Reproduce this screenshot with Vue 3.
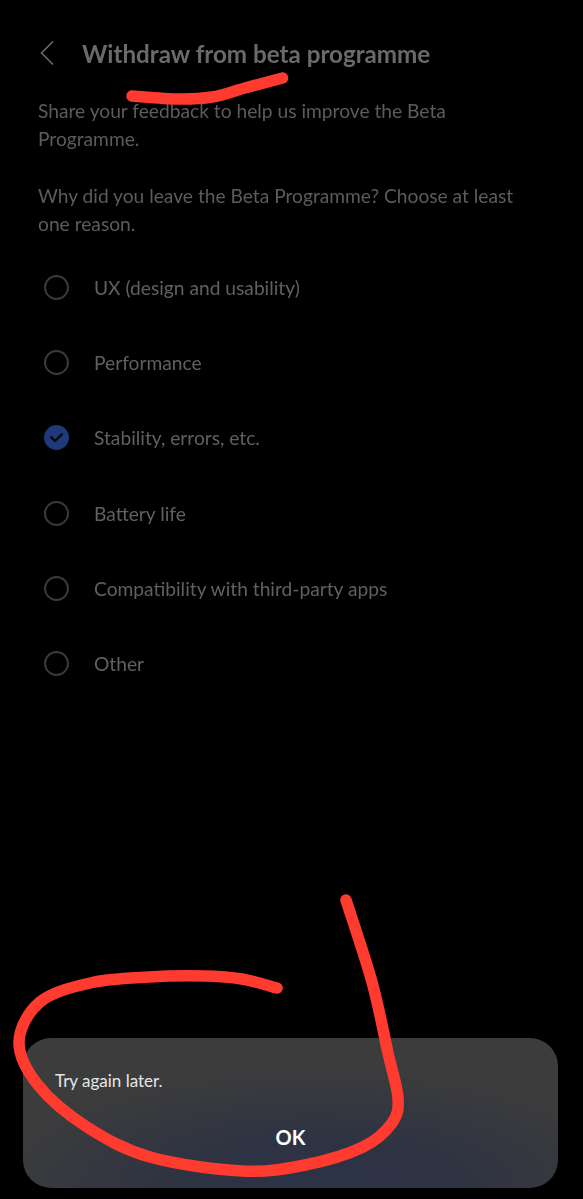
<script setup>
const reasons = [
  { label: 'UX (design and usability)', checked: false },
  { label: 'Performance', checked: false },
  { label: 'Stability, errors, etc.', checked: true },
  { label: 'Battery life', checked: false },
  { label: 'Compatibility with third-party apps', checked: false },
  { label: 'Other', checked: false }
]

function smooth(p) {
  let d = `M${p[0][0]} ${p[0][1]}`
  for (let i = 0; i < p.length - 1; i++) {
    const a = p[i - 1] || p[i], b = p[i], c = p[i + 1], e = p[i + 2] || c
    const c1 = [b[0] + (c[0] - a[0]) / 6, b[1] + (c[1] - a[1]) / 6]
    const c2 = [c[0] - (e[0] - b[0]) / 6, c[1] - (e[1] - b[1]) / 6]
    d += `C${c1[0].toFixed(1)} ${c1[1].toFixed(1)} ${c2[0].toFixed(1)} ${c2[1].toFixed(1)} ${c[0]} ${c[1]}`
  }
  return d
}

const underline = smooth([[132, 96], [178, 99], [212, 97], [245, 88], [282.5, 78]])
const circle = smooth([
  [346, 900], [372, 982], [388, 1053], [398, 1098],
  [392, 1123], [363, 1147], [305, 1165], [242, 1171],
  [150, 1157], [87, 1127], [38, 1085], [19, 1042],
  [40, 1002], [90, 983], [149, 977], [204, 976], [242, 979], [277, 988]
])
</script>

<template>
  <div class="page">
    <header class="header">
      <svg class="back" viewBox="0 0 16 26" width="16" height="26" aria-hidden="true">
        <path d="M14 1.5 2.5 13 14 24.5" fill="none" stroke="#6a6a6a" stroke-width="1.6" />
      </svg>
      <h1 class="title">Withdraw from beta programme</h1>
    </header>

    <section class="intro">
      <p>Share your feedback to help us improve the Beta Programme.</p>
      <p>Why did you leave the Beta Programme? Choose at least one reason.</p>
    </section>

    <ul class="reasons">
      <li v-for="r in reasons" :key="r.label" class="reason">
        <span class="radio" :class="{ checked: r.checked }">
          <svg v-if="r.checked" viewBox="0 0 25 25" width="25" height="25" aria-hidden="true">
            <path d="M7.2 12.2 11 16l6.8-6.6" fill="none" stroke="#05070d" stroke-width="2.4" stroke-linecap="round" stroke-linejoin="round" />
          </svg>
        </span>
        <span class="label">{{ r.label }}</span>
      </li>
    </ul>

    <div class="toast">
      <p class="toast-text">Try again later.</p>
      <div class="toast-action">OK</div>
    </div>

    <svg class="scribble" viewBox="0 0 583 1199" width="583" height="1199" aria-hidden="true">
      <path :d="underline" />
      <path :d="circle" />
    </svg>
  </div>
</template>

<style>
html, body { margin: 0; background: #000; }
</style>

<style scoped>
.page {
  position: relative;
  width: 583px;
  height: 1199px;
  background: #000;
  overflow: hidden;
  display: flex;
  flex-direction: column;
  font-family: Lato, "Noto Sans", sans-serif;
}
.header {
  display: flex;
  align-items: center;
  height: 30px;
  margin-top: 38px;
  padding-left: 39px;
  gap: 27px;
}
.back { flex: none; }
.title {
  margin: 0;
  font-size: 24.2px;
  font-weight: 700;
  color: #6a6a6a;
  white-space: nowrap;
  filter: blur(0.3px);
}
.intro {
  margin-top: 28.5px;
  padding: 0 38px;
  font-size: 19.2px;
  line-height: 28.5px;
  color: #5c5c5c;
  filter: blur(0.3px);
}
.intro p { margin: 0 0 28px; }
.intro p:last-child { margin-bottom: 11.5px; }
.reasons {
  list-style: none;
  margin: 0;
  padding: 0 0 0 44px;
}
.reason {
  display: flex;
  align-items: center;
  gap: 25px;
  height: 75.2px;
}
.radio {
  box-sizing: border-box;
  width: 25px;
  height: 25px;
  flex: none;
  border: 2px solid #3a3a3a;
  border-radius: 50%;
  position: relative;
}
.radio.checked { border: 0; background: #1e3a78; }
.radio svg { display: block; }
.label {
  font-size: 19.2px;
  color: #606060;
  white-space: nowrap;
  filter: blur(0.3px);
}
.toast {
  box-sizing: border-box;
  margin: auto 25px 11px 23px;
  height: 150px;
  border-radius: 28px;
  background:
    radial-gradient(ellipse 330px 120px at 55% 100%, #2c3346 0%, #2e3343 40%, rgba(60, 60, 60, 0) 100%),
    #3c3c3c;
  padding: 32px 32px 0;
  display: flex;
  flex-direction: column;
}
.toast-text {
  margin: 0;
  font-size: 17px;
  line-height: 22px;
  color: #e6e6e6;
}
.toast-action {
  margin-top: 31px;
  text-align: center;
  font-size: 20px;
  font-weight: 700;
  line-height: 28px;
  color: #fff;
}
.scribble {
  position: absolute;
  inset: 0;
  pointer-events: none;
}
.scribble path {
  fill: none;
  stroke: #ff3b30;
  stroke-width: 11.5;
  stroke-linecap: round;
  stroke-linejoin: round;
}
</style>
